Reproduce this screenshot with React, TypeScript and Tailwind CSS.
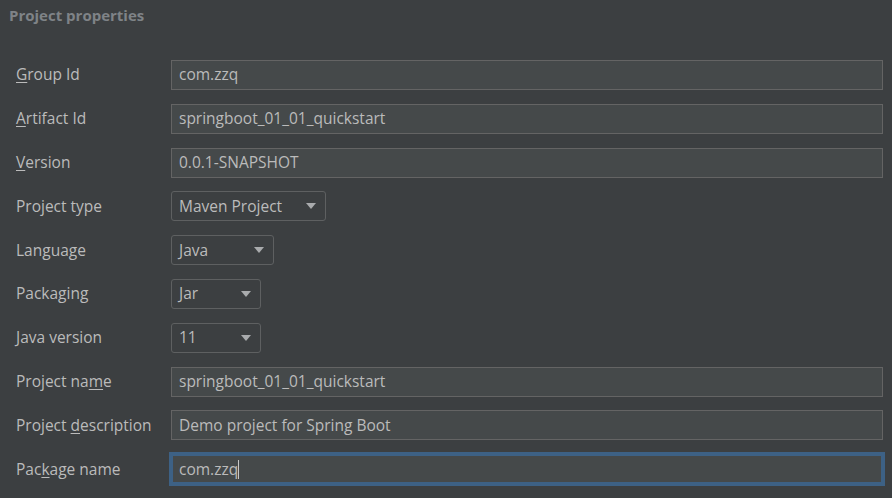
import { ReactNode } from 'react';

type Row = { label: ReactNode; kind: 'text' | 'select' | 'focus'; value: string; width?: string };

const U = ({ c }: { c: string }) => <span className="underline underline-offset-[2px]">{c}</span>;

const rows: Row[] = [
  { label: <><U c="G" />roup Id</>, kind: 'text', value: 'com.zzq' },
  { label: <><U c="A" />rtifact Id</>, kind: 'text', value: 'springboot_01_01_quickstart' },
  { label: <><U c="V" />ersion</>, kind: 'text', value: '0.0.1-SNAPSHOT' },
  { label: 'Project type', kind: 'select', value: 'Maven Project', width: 'w-[155px]' },
  { label: 'Language', kind: 'select', value: 'Java', width: 'w-[103px]' },
  { label: 'Packaging', kind: 'select', value: 'Jar', width: 'w-[90px]' },
  { label: 'Java version', kind: 'select', value: '11', width: 'w-[90px]' },
  { label: <>Project na<U c="m" />e</>, kind: 'text', value: 'springboot_01_01_quickstart' },
  { label: <>Project <U c="d" />escription</>, kind: 'text', value: 'Demo project for Spring Boot' },
  { label: <>Pac<U c="k" />age name</>, kind: 'focus', value: 'com.zzq' },
];

function Field({ row }: { row: Row }) {
  if (row.kind === 'select') {
    return (
      <div className={`${row.width} h-[30px] flex items-center justify-between border border-[#5e6061] rounded-[3px] pl-[7px] pr-[9px]`}>
        <span>{row.value}</span>
        <svg width="10" height="6" viewBox="0 0 10 6"><path d="M0 0h10L5 6z" fill="#a9abad" /></svg>
      </div>
    );
  }
  if (row.kind === 'focus') {
    return (
      <div className="h-[30px] flex items-center bg-[#45494a] border-2 border-[#3d6185] shadow-[0_0_0_2px_#3d6185] pl-[6px]">
        <span>{row.value}</span>
        <span className="w-px h-[19px] bg-[#c8c8c8]" />
      </div>
    );
  }
  return (
    <div className="h-[30px] flex items-center bg-[#45494a] border border-[#646464] pl-[7px]">
      <span>{row.value}</span>
    </div>
  );
}

export default function App() {
  return (
    <div className="w-[892px] h-[498px] overflow-hidden bg-[#3c3f41] text-[#bbbbbb] [font-family:'Open_Sans',sans-serif]">
      <div className="pl-[9px] pt-[4px] text-[15px] leading-[22px] font-bold text-[#7f8387]">Project properties</div>
      <div className="mt-[34px] pl-[16px] pr-[9px] grid grid-cols-[155px_1fr] gap-y-[13.8px] text-[15.5px]">
        {rows.map((r, i) => (
          <div key={i} className="contents">
            <div className="h-[30px] flex items-center"><span>{r.label}</span></div>
            <Field row={r} />
          </div>
        ))}
      </div>
    </div>
  );
}
